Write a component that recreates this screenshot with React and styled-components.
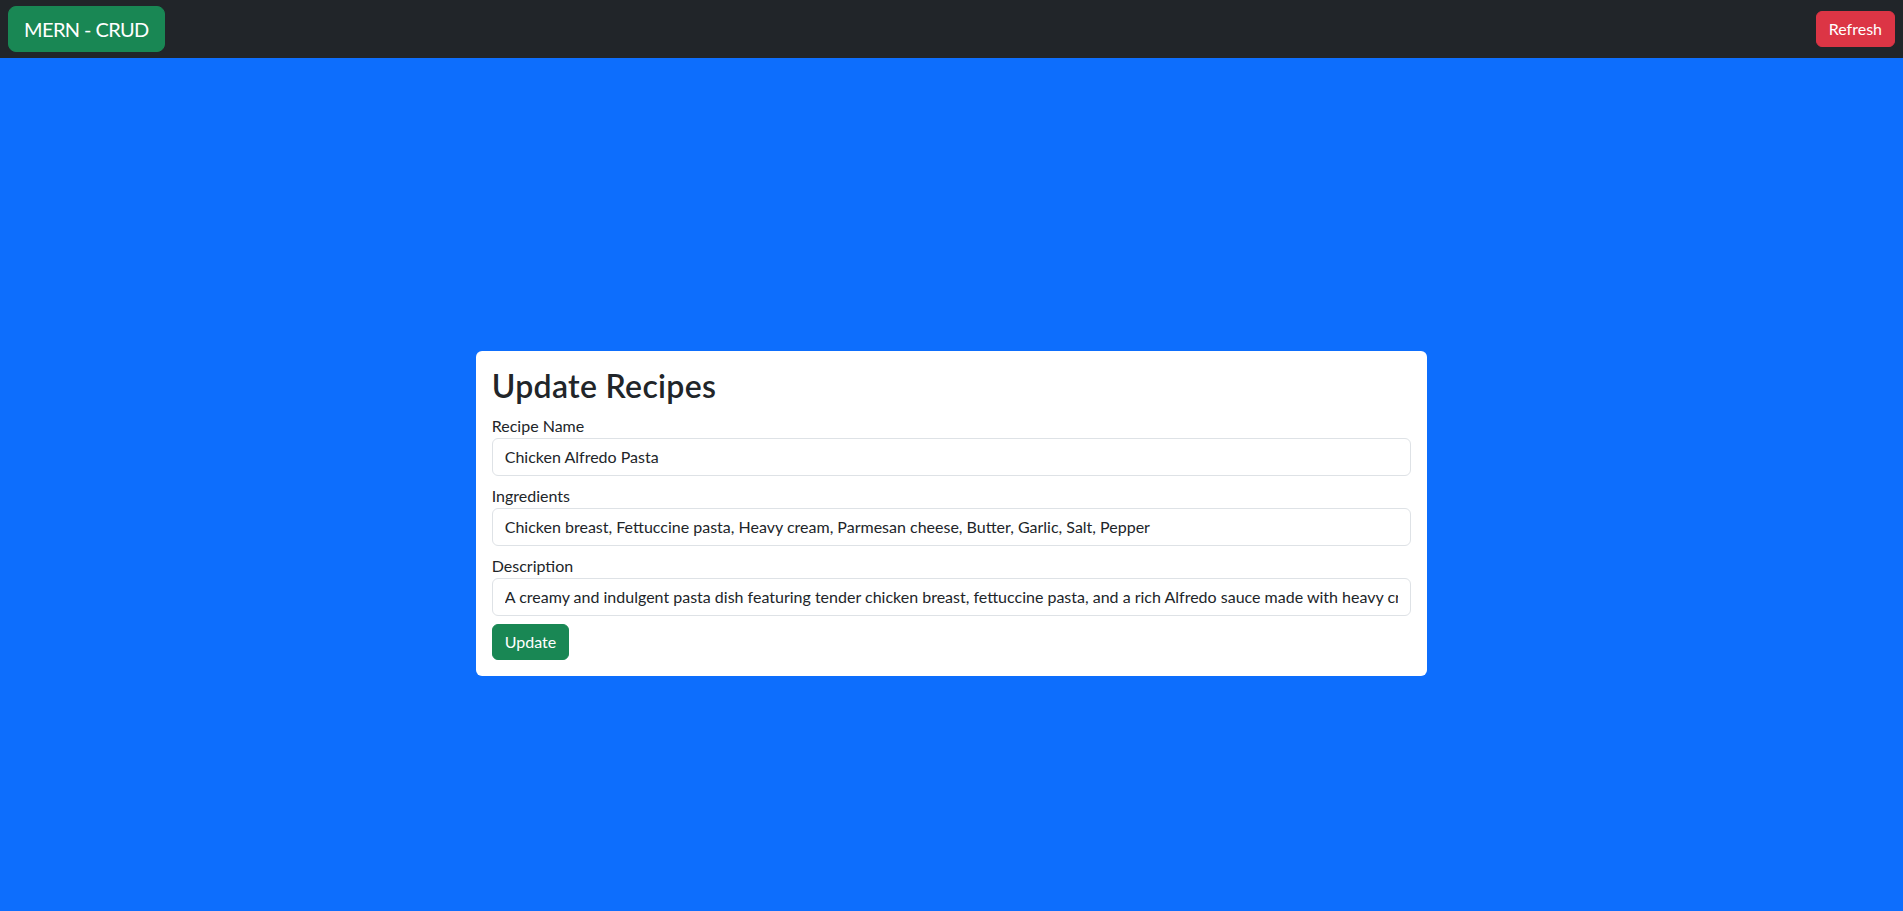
import React, { useState } from "react";
import styled, { createGlobalStyle } from "styled-components";

const GlobalStyle = createGlobalStyle`
  *, *::before, *::after { box-sizing: border-box; }
  html, body { margin: 0; padding: 0; }
  body {
    font-family: "Segoe UI", Lato, "Noto Sans", "Liberation Sans", sans-serif;
    font-size: 16px;
    line-height: 1.5;
    color: #212529;
    background: #fff;
  }
`;

const NavBar = styled.nav`
  background: #212529;
  height: 58px;
  padding: 0 8px;
  display: flex;
  align-items: center;
  justify-content: space-between;
`;

const Button = styled.button`
  font-family: inherit;
  border: 1px solid ${(p) => p.$bg};
  background: ${(p) => p.$bg};
  color: #fff;
  cursor: pointer;
  font-size: ${(p) => (p.$large ? "20px" : "16px")};
  letter-spacing: ${(p) => (p.$large ? "-0.6px" : "0")};
  line-height: 1.5;
  padding: ${(p) => (p.$large ? "7px 15px" : "5px 12px")};
  border-radius: ${(p) => (p.$large ? "8px" : "6px")};
  font-weight: 400;
`;

const Page = styled.main`
  background: #0d6efd;
  height: 100vh;
  display: flex;
  justify-content: center;
  align-items: center;
`;

const Card = styled.form`
  width: 50%;
  background: #fff;
  border-radius: 6px;
  padding: 16px;
`;

const Title = styled.h2`
  margin: 0 0 8px;
  font-size: 32px;
  font-weight: 600;
  letter-spacing: 0.3px;
  line-height: 1.2;
`;

const Field = styled.div`
  margin-bottom: 8px;
`;

const Label = styled.label`
  display: inline-block;
`;

const Input = styled.input`
  display: block;
  width: 100%;
  font-family: inherit;
  font-size: 16px;
  line-height: 1.5;
  color: #212529;
  padding: 6px 12px;
  border: 1px solid #dee2e6;
  border-radius: 6px;
  background: #fff;
  outline: none;
`;

export default function App() {
  const [name, setName] = useState("Chicken Alfredo Pasta");
  const [ingredients, setIngredients] = useState(
    "Chicken breast, Fettuccine pasta, Heavy cream, Parmesan cheese, Butter, Garlic, Salt, Pepper"
  );
  const [description, setDescription] = useState(
    "A creamy and indulgent pasta dish featuring tender chicken breast, fettuccine pasta, and a rich Alfredo sauce made with heavy cream, Parmesan cheese, butter, and garlic."
  );

  return (
    <>
      <GlobalStyle />
      <NavBar>
        <Button $bg="#198754" $large type="button">MERN - CRUD</Button>
        <Button $bg="#dc3545" type="button">Refresh</Button>
      </NavBar>
      <Page>
        <Card onSubmit={(e) => e.preventDefault()}>
          <Title>Update Recipes</Title>
          <Field>
            <Label htmlFor="name">Recipe Name</Label>
            <Input id="name" value={name} onChange={(e) => setName(e.target.value)} />
          </Field>
          <Field>
            <Label htmlFor="ingredients">Ingredients</Label>
            <Input
              id="ingredients"
              value={ingredients}
              onChange={(e) => setIngredients(e.target.value)}
            />
          </Field>
          <Field>
            <Label htmlFor="description">Description</Label>
            <Input
              id="description"
              value={description}
              onChange={(e) => setDescription(e.target.value)}
            />
          </Field>
          <Button $bg="#198754" type="submit">Update</Button>
        </Card>
      </Page>
    </>
  );
}
